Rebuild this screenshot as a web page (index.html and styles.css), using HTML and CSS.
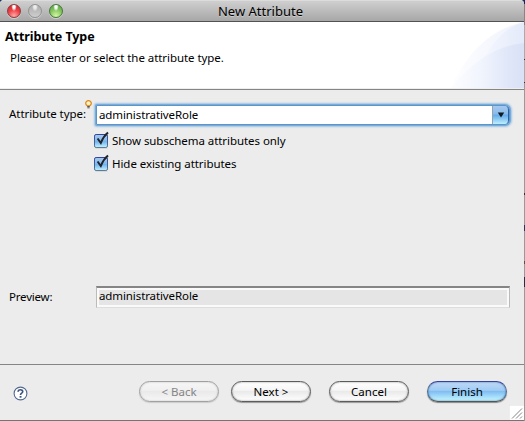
FILE: index.html
```html
<!DOCTYPE html>
<html lang="en">
<head>
<meta charset="utf-8">
<title>New Attribute</title>
<link rel="stylesheet" href="styles.css">
</head>
<body>
<div class="desktop">
<main class="window">
  <header class="titlebar">
    <div class="lights"><i class="light red"></i><i class="light gray"></i><i class="light green"></i></div>
    <h1 class="title">New Attribute</h1>
  </header>
  <section class="banner">
    <div class="banner-text">
      <h2 class="heading">Attribute Type</h2>
      <p class="hint">Please enter or select the attribute type.</p>
    </div>
    <svg class="banner-art" width="76" height="66" viewBox="0 0 76 66">
      <defs>
        <linearGradient id="a"><stop offset="0" stop-color="#fefeff"/><stop offset=".4" stop-color="#f8f9fe"/><stop offset="1" stop-color="#eef2fc"/></linearGradient>
        <linearGradient id="b"><stop offset="0" stop-color="#f8faff"/><stop offset="1" stop-color="#e4eafa"/></linearGradient>
        <linearGradient id="c"><stop offset="0" stop-color="#fdfdff"/><stop offset=".4" stop-color="#f1f5fd"/><stop offset=".8" stop-color="#dfe6f8"/><stop offset="1" stop-color="#d9e1f6"/></linearGradient>
      </defs>
      <path d="M3 66Q28 10 76 0V66Z" fill="url(#a)"/>
      <path d="M25 66C35 32 51 7 76 0V66Z" fill="url(#b)"/>
      <path d="M3 66Q36 25 76 21V66Z" fill="url(#c)"/>
    </svg>
  </section>
  <section class="form">
    <div class="row type-row">
      <label class="label type-label">Attribute type:</label>
      <svg class="bulb" width="7" height="9" viewBox="0 0 7 9"><path d="M2.2 5.8C.9 4.8.7 3.8.7 3.2a2.8 2.5 0 0 1 5.6 0c0 .6-.2 1.6-1.5 2.6Z" fill="#fff3c4" stroke="#df8512" stroke-width="1.2"/><path d="M2.3 6.5h2.4M2.3 7.8h2.4" stroke="#555" stroke-width="1"/></svg>
      <div class="combo"><span class="value combo-value">administrativeRole</span><span class="drop"><svg width="8" height="6" viewBox="0 0 8 6"><path d="M.8 .5H7.2L4 5.5Z" fill="#101820"/></svg></span></div>
    </div>
    <div class="checks">
      <div class="check"><svg width="16" height="18" viewBox="0 0 16 18"><use href="#box"/></svg><span class="show-text">Show subschema attributes only</span></div>
      <div class="check"><svg width="16" height="18" viewBox="0 0 16 18"><use href="#box"/></svg><span class="hide-text">Hide existing attributes</span></div>
    </div>
    <div class="row preview-row">
      <label class="label preview-label">Preview:</label>
      <div class="preview"><span class="value preview-value">administrativeRole</span></div>
    </div>
  </section>
  <footer class="footer">
    <svg class="help" width="15" height="15" viewBox="0 0 15 15"><circle cx="7.5" cy="7.5" r="6.4" fill="#fff" stroke="#526a90" stroke-width="1.1"/><path d="M5.1 5.8C5.1 3 9.9 3.1 9.7 5.7C9.6 7.2 7.5 7.2 7.5 9" fill="none" stroke="#3c5480" stroke-width="1.7"/><path d="M6.6 10h1.9v1.7H6.6z" fill="#3c5480"/></svg>
    <div class="buttons">
      <button class="btn disabled">&lt; Back</button>
      <button class="btn">Next &gt;</button>
      <button class="btn">Cancel</button>
      <button class="btn primary">Finish</button>
    </div>
    <svg class="grip" width="15" height="15" viewBox="0 0 15 15"><path d="M0 0H15V15H0Z" fill="#fff"/><path d="M3 13.5L13 3.5M7 13.5L13 7.5M11 13.5L13 11.5" stroke="#858585" stroke-width="1"/><path d="M0 15V0H15" fill="none" stroke="#ddd"/></svg>
  </footer>
</main>
<aside class="edge"></aside>
</div>
<svg class="defs" width="0" height="0">
  <defs>
    <linearGradient id="blue" x2="0" y2="1"><stop offset="0" stop-color="#a9c7ec"/><stop offset=".45" stop-color="#86bced"/><stop offset=".55" stop-color="#72b4ee"/><stop offset="1" stop-color="#c4f4ff"/></linearGradient>
    <linearGradient id="rim" x2="0" y2="1"><stop offset="0" stop-color="#30459c"/><stop offset="1" stop-color="#53748e"/></linearGradient>
    <g id="box"><rect x=".5" y="3.5" width="13" height="13" rx="1.6" fill="url(#blue)" stroke="url(#rim)"/><path d="M1.5 17.4H13.5" stroke="#d2d2d2" stroke-width=".8"/><path d="M3.6 7.5L6.8 12C8.2 8.5 10.5 4.5 14 1.6" fill="none" stroke="#20242c" stroke-width="2"/></g>
  </defs>
</svg>
</body>
</html>
```

FILE: styles.css
```css
* { box-sizing: border-box; }
body {
  margin: 0;
  width: 525px;
  height: 421px;
  overflow: hidden;
  font: 11.5px/16px "Noto Sans", "Open Sans", sans-serif;
  letter-spacing: -0.06px;
  color: #000;
  background: #8c8c8c;
}
h1, h2, p { margin: 0; }
span, label, h1, h2, p { white-space: nowrap; }
.desktop { display: flex; width: 525px; height: 421px; background: #17345f; }
.window {
  width: 524px;
  height: 421px;
  background: #ececec;
  border-radius: 4px 4px 0 0;
  border-bottom: 1px solid #747474;
  overflow: hidden;
}
.edge {
  width: 1px;
  height: 421px;
  background: linear-gradient(#102c5c 0 4px, #858585 4px 25px, #aaa 25px 59px, #333 59px 60px, #aaa 60px 82px, #333 82px 83px, #999 83px 193px, #333 193px 195px, #999 195px 225px, #263858 225px 231px, #999 231px 261px, #6d4b36 261px 264px, #999 264px 277px, #263040 277px 287px, #999 287px);
}
.titlebar {
  display: grid;
  grid-template-columns: 70px 1fr 70px;
  height: 22px;
  background: linear-gradient(#e8e8e8 0, #cfcfcf 1px, #a7a7a7 21px);
  border-bottom: 1px solid #525252;
}
.lights { display: flex; gap: 7px; padding: 4px 0 0 7px; }
.light {
  width: 14px;
  height: 14px;
  border-radius: 50%;
  border: 1px solid #777;
  box-shadow: 0 1px 0 #cfcfcf;
}
.red { border-color: #8e3d3f; background: radial-gradient(ellipse at 50% 12%, #fff 0 13%, transparent 32%), radial-gradient(circle at 50% 90%, #ffaaa5, #ed4247 50%, #c51d28); }
.gray { border-color: #929292; background: radial-gradient(ellipse at 50% 12%, #eee 0 13%, transparent 35%), linear-gradient(#aaa, #cecece); }
.green { border-color: #477739; background: radial-gradient(ellipse at 50% 12%, #fff 0 13%, transparent 32%), radial-gradient(circle at 50% 90%, #d6f8a2, #86c763 50%, #4f983b); }
.title { padding: 3px 3px 0 0; font-size: 13px; font-weight: 400; line-height: 16px; letter-spacing: 0; text-align: center; text-shadow: 0 1px 0 #ccc; }
.banner {
  display: flex;
  justify-content: space-between;
  height: 68px;
  background: #fff;
  border-bottom: 1px solid #858585;
  box-shadow: inset 0 -1px #eee;
}
.banner-text { padding: 6px 0 0 5px; }
.heading { font-size: 12.5px; line-height: 18px; font-weight: 700; letter-spacing: -0.06px; }
.hint { padding: 4px 0 0 5px; line-height: 16px; }
.form { height: 274px; padding: 13px 0 0 9px; }
.row { display: flex; }
.type-row { height: 26px; }
.type-label { width: 76px; padding-top: 3px; }
.bulb { margin-top: -3px; margin-right: 3px; }
.combo {
  display: flex;
  justify-content: space-between;
  width: 414px;
  height: 20px;
  margin: 2px 0 0 1px;
  border: 1px solid #5d94c9;
  border-radius: 1px 5px 5px 1px;
  background: #fff;
  box-shadow: 0 0 0 1px #79add9, 0 0 2px 2px #9dc4e4;
}
.value { line-height: 16px; letter-spacing: -0.1px; }
.combo-value { padding: 1px 0 0 2px; }
.drop {
  display: flex;
  align-items: center;
  justify-content: center;
  width: 17px;
  height: 18px;
  border-left: 1px solid #91a2b0;
  border-right: 1px solid #2861a8;
  border-radius: 0 4px 4px 0;
  background: linear-gradient(#a6c9ef, #88bae9 45%, #62aaea 50%, #bdefff);
}
.checks { display: grid; gap: 5px; padding: 2px 0 0 85px; }
.check { display: flex; height: 18px; gap: 2px; }
.check span { padding-top: 2px; }
.preview-row { margin-top: 114px; }
.preview-label { width: 87px; padding-top: 3px; letter-spacing: -0.2px; }
.preview {
  width: 414px;
  height: 22px;
  border: 1px solid #bbb;
  border-top: 2px solid #858585;
  border-bottom-color: #ddd;
  background: #e5e5e5;
  box-shadow: inset 0 0 0 2px #fafafa;
}
.preview-value { display: block; padding-left: 2px; }
.footer { display: flex; height: 56px; border-top: 1px solid #858585; }
.help { margin: 21px 0 0 13px; }
.buttons { display: flex; gap: 18px; margin: 16px 0 0 111px; }
.btn {
  width: 80px;
  height: 21px;
  padding: 0;
  border: 1px solid #5c5c5c;
  border-radius: 11px;
  background: linear-gradient(#fff, #f5f5f5 44%, #e9e9e9 48%, #fff);
  box-shadow: 0 1px 1px #999, inset 0 0 2px #888;
  font: 11.5px/18px "Noto Sans", sans-serif;
  color: #000;
}
.btn:nth-child(2) { margin-left: -6px; }
.disabled { border-color: #a1a1a1; color: #858585; background: linear-gradient(#f6f6f6, #f0f0f0 44%, #e9e9e9 48%, #f7f7f7); box-shadow: 0 1px 1px #ccc, inset 0 0 2px #bbb; }
.primary { border-color: #3542a0 #4b6b94 #555; background: linear-gradient(#c0d8f5, #9fccf4 44%, #7dbcf2 48%, #c6f7ff); box-shadow: 0 1px 1px #888, inset 0 0 2px #456e9e; }
.grip { margin: 40px 0 0 2px; }
.defs { position: absolute; }
```
